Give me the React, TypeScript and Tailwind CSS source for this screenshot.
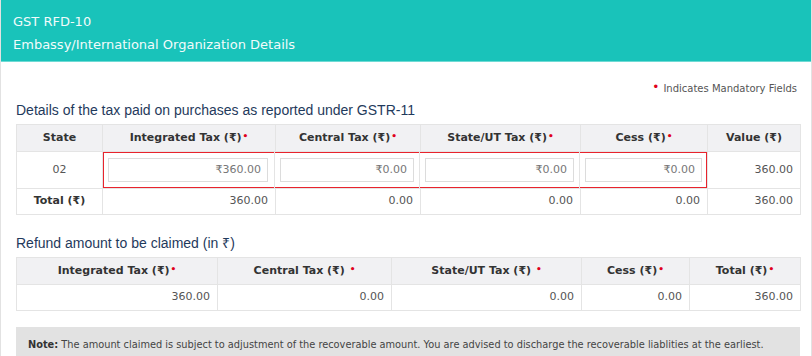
const verdana = { fontFamily: '"DejaVu Sans", Verdana, sans-serif' };

function Req() {
  return <span className="text-[#e0001b] text-[9px] ml-[1px] align-top">•</span>;
}

function Th({ children, w }: { children: React.ReactNode; w: string }) {
  return (
    <th className={`${w} border border-[#e4e4e4] bg-[#f1f1f3] font-bold text-[#333] text-[11px] text-center h-[27px] px-2`}>
      {children}
    </th>
  );
}

function MoneyInput({ value }: { value: string }) {
  return (
    <div className="h-[24px] border border-[#dcdcdc] bg-white flex items-center justify-end px-[6px] text-[11px] text-[#777]">
      {value}
    </div>
  );
}

export default function App() {
  return (
    <div className="w-[812px] h-[356px] overflow-hidden bg-white border-x border-[#e2e2e2]" style={verdana}>
      <div className="h-[62px] bg-[#19c3ba] border-b border-[#6fdad4] pl-[12px] pt-[10px] text-[#f2fbfb] text-[13px] leading-[23px]">
        <div>GST RFD-10</div>
        <div>Embassy/International Organization Details</div>
      </div>

      <div className="px-[14px]">
        <div className="flex justify-end items-center h-[23px] mt-[15px] text-[10px] text-[#555]">
          <span className="text-[#e0001b] text-[12px] mr-[4px] -mt-[4px]">•</span>
          Indicates Mandatory Fields
        </div>
        <div
          className="text-[14px] text-[#1f3a5c] h-[24px] leading-[20px] pl-[1px]"
          style={{ fontFamily: '"Liberation Sans", Arial, sans-serif' }}
        >
          Details of the tax paid on purchases as reported under GSTR-11
        </div>
        <table className="w-[784px] table-fixed border-collapse text-[11px] text-[#555] ml-[1px]">
          <thead>
            <tr>
              <Th w="w-[86px]">State</Th>
              <Th w="w-[173px]">Integrated Tax (₹)<Req /></Th>
              <Th w="w-[145px]">Central Tax (₹)<Req /></Th>
              <Th w="w-[160px]">State/UT Tax (₹)<Req /></Th>
              <Th w="w-[127px]">Cess (₹)<Req /></Th>
              <Th w="w-[93px]">Value (₹)</Th>
            </tr>
          </thead>
          <tbody>
            <tr className="h-[36px]">
              <td className="border border-[#e4e4e4] text-center">02</td>
              <td colSpan={4} className="border border-[#e4e4e4] p-0">
                <div className="h-[38px] shadow-[inset_0_0_0_2px_#e8232c] -mx-[1px] -my-[1px] flex items-center">
                  <div className="w-[172px] px-[6px]"><MoneyInput value="₹360.00" /></div>
                  <div className="w-[145px] px-[5px] border-l border-[#e4e4e4] h-full flex items-center">
                    <div className="w-full"><MoneyInput value="₹0.00" /></div>
                  </div>
                  <div className="w-[160px] px-[5px] border-l border-[#e4e4e4] h-full flex items-center">
                    <div className="w-full"><MoneyInput value="₹0.00" /></div>
                  </div>
                  <div className="flex-1 pl-[5px] pr-[6px] border-l border-[#e4e4e4] h-full flex items-center">
                    <div className="w-full"><MoneyInput value="₹0.00" /></div>
                  </div>
                </div>
              </td>
              <td className="border border-[#e4e4e4] text-right pr-[7px]">360.00</td>
            </tr>
            <tr className="h-[26px]">
              <td className="border border-[#e4e4e4] text-center font-bold text-[#333]">Total (₹)</td>
              <td className="border border-[#e4e4e4] text-right pr-[7px]">360.00</td>
              <td className="border border-[#e4e4e4] text-right pr-[7px]">0.00</td>
              <td className="border border-[#e4e4e4] text-right pr-[7px]">0.00</td>
              <td className="border border-[#e4e4e4] text-right pr-[7px]">0.00</td>
              <td className="border border-[#e4e4e4] text-right pr-[7px]">360.00</td>
            </tr>
          </tbody>
        </table>

        <div
          className="text-[14px] text-[#1f3a5c] h-[20px] leading-[20px] mt-[18px] mb-[4px] pl-[1px]"
          style={{ fontFamily: '"Liberation Sans", Arial, sans-serif' }}
        >
          Refund amount to be claimed (in ₹)
        </div>
        <table className="w-[784px] table-fixed border-collapse text-[11px] text-[#555] ml-[1px]">
          <thead>
            <tr>
              <Th w="w-[201px]">Integrated Tax (₹)<Req /></Th>
              <Th w="w-[174px]">Central Tax (₹) <Req /></Th>
              <Th w="w-[190px]">State/UT Tax (₹) <Req /></Th>
              <Th w="w-[108px]">Cess (₹)<Req /></Th>
              <Th w="w-[111px]">Total (₹)<Req /></Th>
            </tr>
          </thead>
          <tbody>
            <tr className="h-[26px]">
              <td className="border border-[#e4e4e4] text-right pr-[7px]">360.00</td>
              <td className="border border-[#e4e4e4] text-right pr-[7px]">0.00</td>
              <td className="border border-[#e4e4e4] text-right pr-[7px]">0.00</td>
              <td className="border border-[#e4e4e4] text-right pr-[7px]">0.00</td>
              <td className="border border-[#e4e4e4] text-right pr-[7px]">360.00</td>
            </tr>
          </tbody>
        </table>

        <div className="mt-[16px] ml-[1px] w-[784px] h-[40px] bg-[#e2e2e2] pl-[12px] pt-[11px] text-[9.8px] text-[#444] whitespace-nowrap">
          <b className="text-[#333]">Note:</b> The amount claimed is subject to adjustment of the recoverable amount. You are advised to discharge the recoverable liablities at the earliest.
        </div>
      </div>
    </div>
  );
}
